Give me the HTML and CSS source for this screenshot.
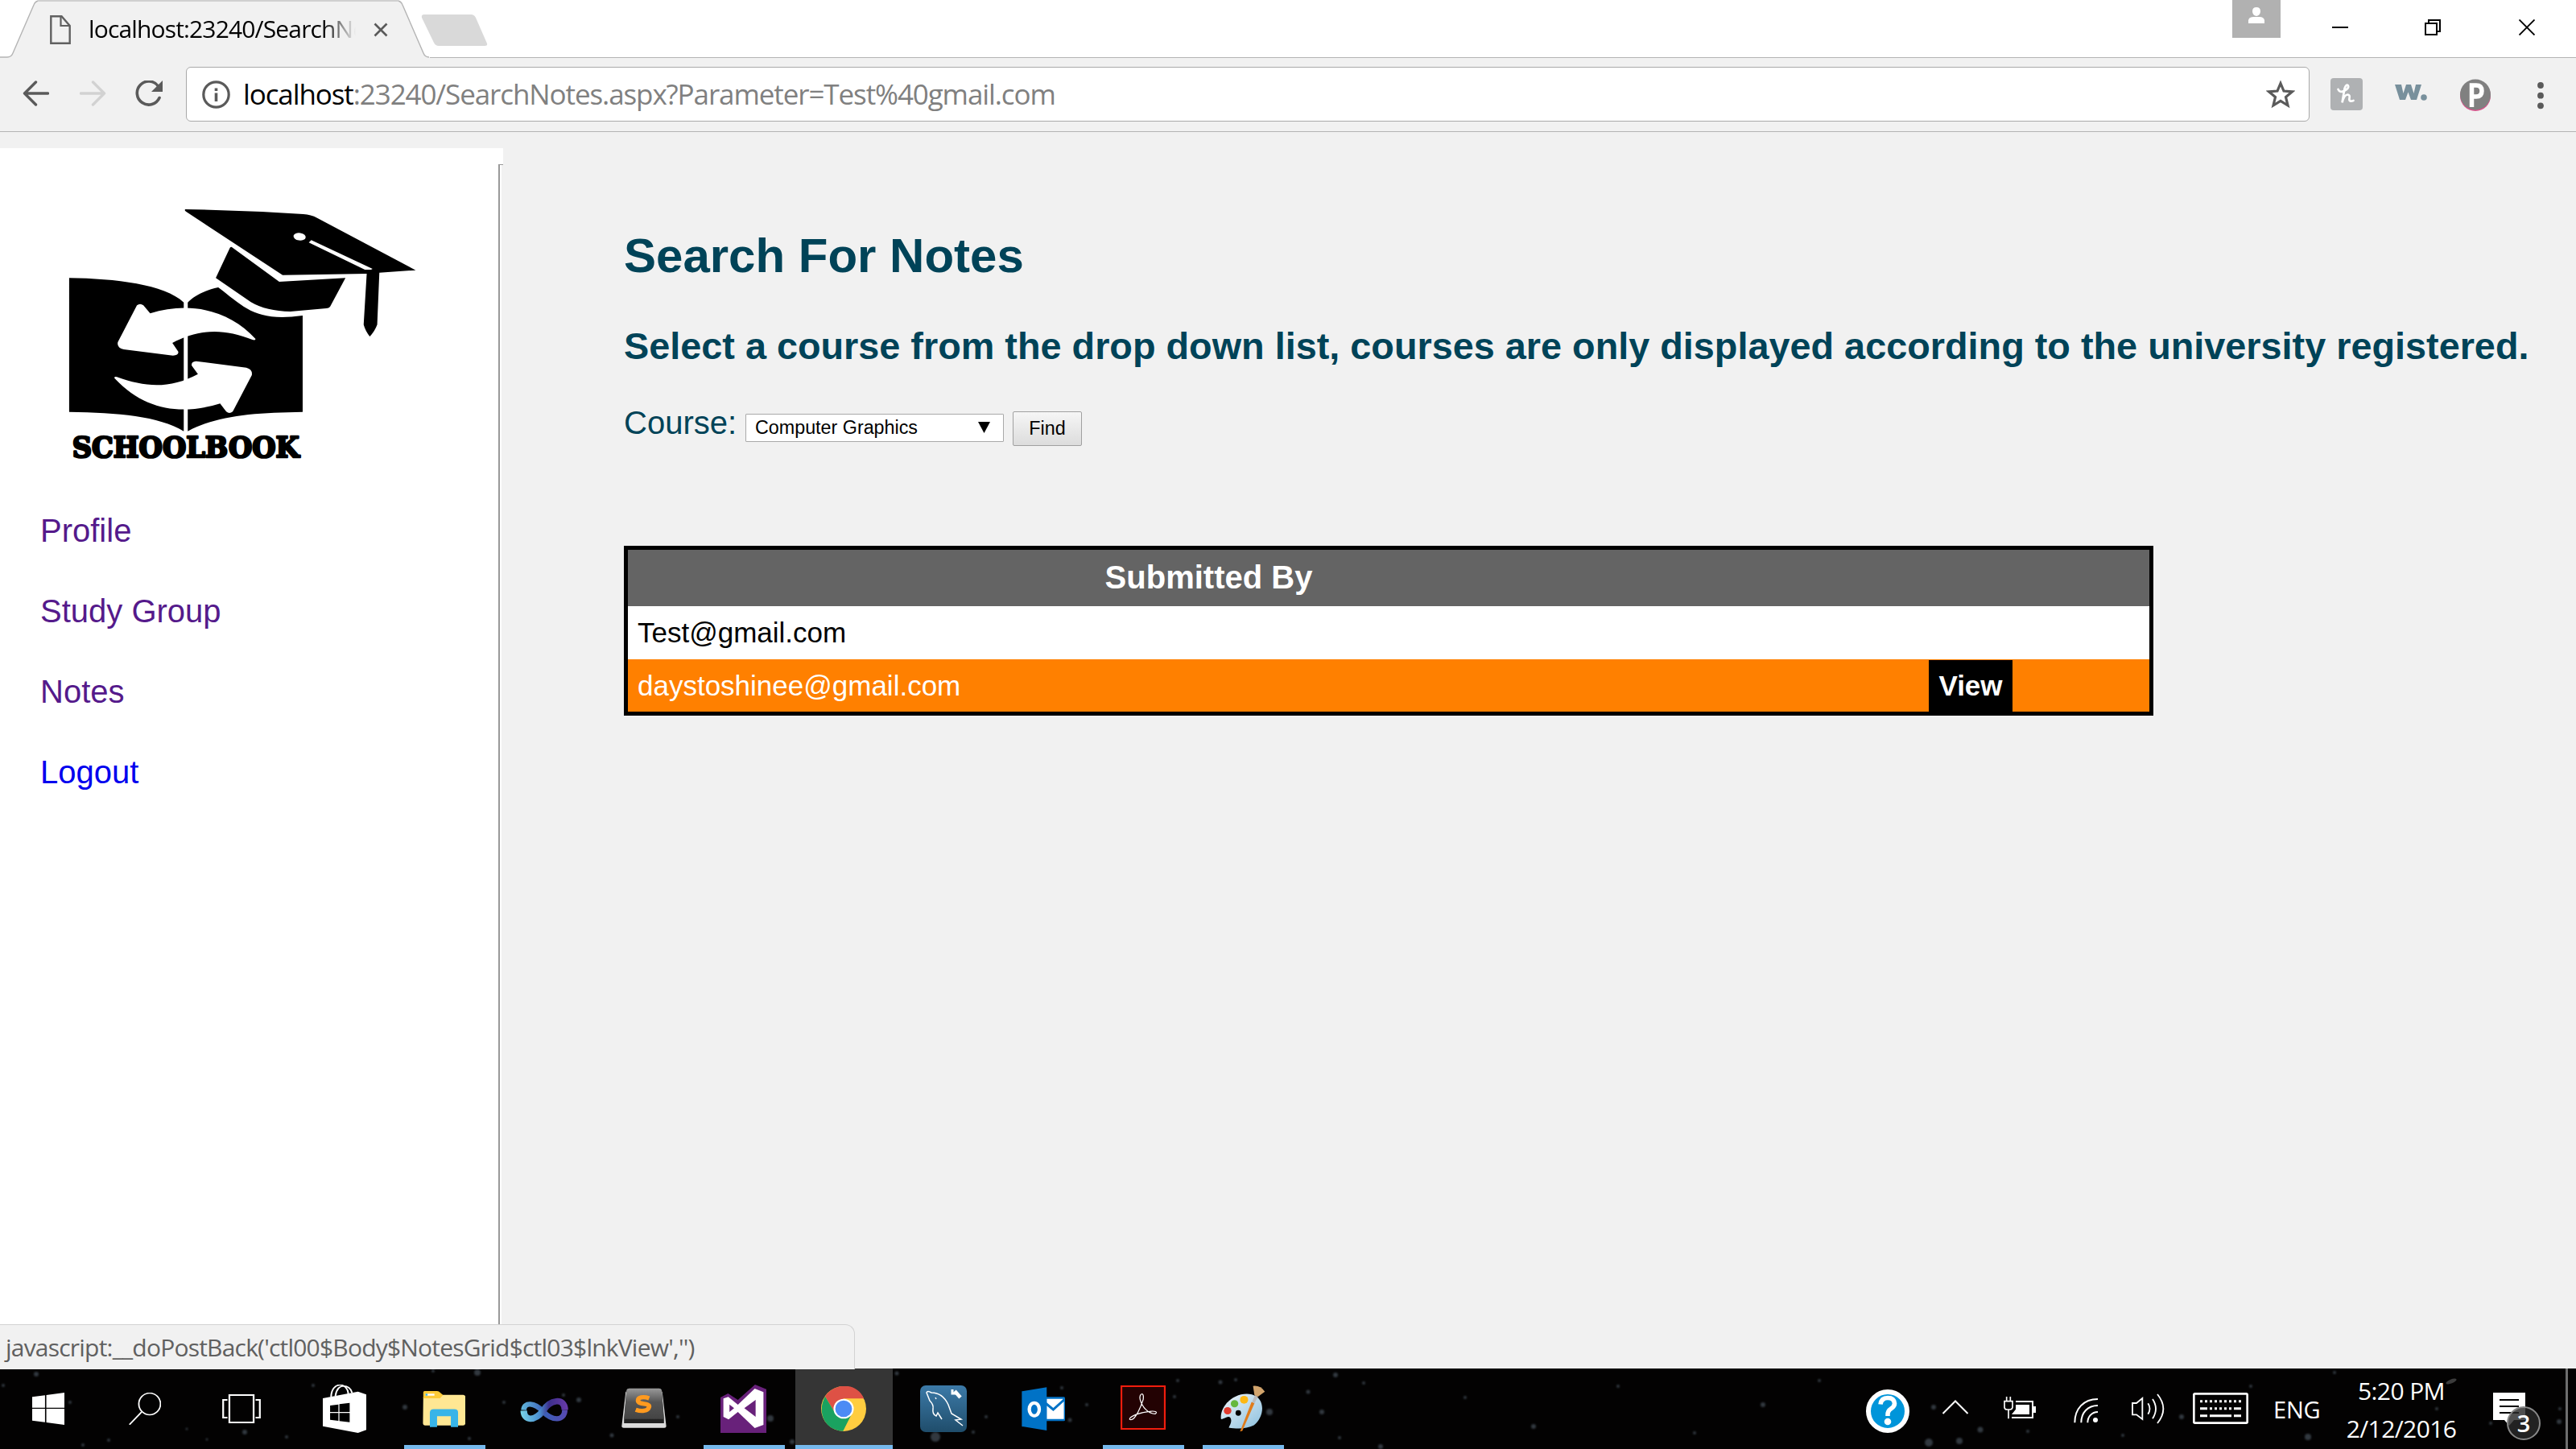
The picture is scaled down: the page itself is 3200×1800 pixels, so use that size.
FILE: index.html
```html
<!DOCTYPE html>
<html lang="en">
<head>
<meta charset="utf-8">
<title>Search For Notes</title>
<link rel="stylesheet" href="styles.css">
</head>
<body>
<div class="screen">
  <header class="tabstrip">
    <div class="tab">
      <svg class="tab-shape" viewBox="0 0 534 72"><path d="M0 71H10Q14 71 16 66L42 6Q44 1 49 1H493Q498 1 500 6L526 66Q528 71 532 71H534V72H0Z" fill="#f1f1f1"/><path d="M0 71H9Q14 71 16 66L42 6Q44 1 49 1H493Q498 1 500 6L526 66Q528 71 533 71" fill="none" stroke="#b4b4b4" stroke-width="1.4"/><path d="M47 1H495" stroke="#d0d0d0" stroke-width="2"/></svg>
      <svg class="page-icon" viewBox="0 0 26 36"><path d="M1.3 1.3H14.5L24.7 13V34.7H1.3Z" fill="none" stroke="#616161" stroke-width="2.4"/><path d="M13.5 1V13H25" fill="none" stroke="#616161" stroke-width="2.2"/></svg>
      <span class="tab-title">localhost:23240/SearchNo</span>
      <svg class="tab-close" viewBox="0 0 18 18"><path d="M1.5 1.5 16.5 16.5M16.5 1.5 1.5 16.5" stroke="#5a5a5a" stroke-width="2.6"/></svg>
    </div>
    <svg class="new-tab" viewBox="0 0 84 42"><path d="M4 1H62Q66 1 68 5L82 37Q83 40 79 40H22Q18 40 16 36L1 5Q0 1 4 1Z" fill="#d9d9d9"/></svg>
    <div class="window-controls">
      <svg class="user" viewBox="0 0 60 47"><path d="M0 0H60V47H0Z" fill="#b1b1b1"/><path d="M30 9q5 0 5 5t-5 6q-5-1-5-6t5-5zM20 29v-4q1-4 6-4h8q5 0 6 4v4z" fill="#fff"/></svg>
      <svg class="minimize" viewBox="0 0 20 20"><path d="M0 10H20" stroke="#000" stroke-width="2"/></svg>
      <svg class="restore" viewBox="0 0 20 20"><path d="M1 5H15V19H1ZM5 5V1H19V15H15" fill="none" stroke="#000" stroke-width="2"/></svg>
      <svg class="close" viewBox="0 0 20 20"><path d="M.5.5 19.5 19.5M19.5.5.5 19.5" stroke="#000" stroke-width="1.9"/></svg>
    </div>
  </header>

  <div class="toolbar">
    <svg class="back" viewBox="0 0 32 32"><path d="M31 16H2M16 2 2 16 16 30" fill="none" stroke="#5a5a5a" stroke-width="3.4" stroke-linecap="round" stroke-linejoin="round"/></svg>
    <svg class="forward" viewBox="0 0 32 32"><path d="M1 16H30M16 2 30 16 16 30" fill="none" stroke="#d2d2d2" stroke-width="3.4" stroke-linecap="round" stroke-linejoin="round"/></svg>
    <svg class="reload" viewBox="0 0 35 34"><path d="M28.5 7A14.5 14.5 0 1 0 30 21.500" fill="none" stroke="#5a5a5a" stroke-width="3.6" stroke-linecap="round"/><path d="M34 0V14H20Z" fill="#5a5a5a"/></svg>
    <div class="omnibox">
      <svg class="info" viewBox="0 0 35 35"><circle cx="17.500" cy="17.500" r="15.700" fill="none" stroke="#5a5a5a" stroke-width="3.2"/><path d="M17.500 15.500V26M17.500 9.500V13" stroke="#5a5a5a" stroke-width="3.6"/></svg>
      <span class="url"><span class="host">localhost</span>:23240/SearchNotes.aspx?Parameter=Test%40gmail.com</span>
      <svg class="star" viewBox="0 0 36 36"><path d="M18 4.500 22 14 32.500 14.800 24.500 21.500 27 32 18 26.500 9 32 11.500 21.500 3.500 14.800 14 14Z" fill="none" stroke="#5a5a5a" stroke-width="3.2"/></svg>
    </div>
    <svg class="ext-honey" viewBox="0 0 40 40"><rect width="40" height="40" rx="4" fill="#afb1b3"/><path d="M9.500 14Q11.500 18.500 17 16Q23.500 12.500 22 9.500Q19.500 7 17.500 13L14.500 30.500Q17 20.500 21.500 20.500Q24.500 21 23.500 25Q22.500 30 28.500 28" fill="none" stroke="#fff" stroke-width="2.700" stroke-linecap="round"/></svg>
    <svg class="ext-w" viewBox="0 0 40 22"><path d="M0 1H8L10.500 12 14 1H20L23.500 12 26 1H33L27 20H20L16.500 10.500 13 20H6Z" fill="#78909c"/><circle cx="36" cy="17" r="3.800" fill="#78909c"/></svg>
    <svg class="ext-p" viewBox="0 0 40 40"><circle cx="20" cy="21" r="19" fill="#d8548c"/><circle cx="20" cy="19.500" r="19" fill="#808080"/><path d="M15.500 35V8H21Q28 8 28 15T21 22H17" fill="none" stroke="#fff" stroke-width="5.500"/></svg>
    <svg class="menu" viewBox="0 0 8 34"><circle cx="4" cy="4" r="3.900" fill="#5a5a5a"/><circle cx="4" cy="16.700" r="3.900" fill="#5a5a5a"/><circle cx="4" cy="29.300" r="3.900" fill="#5a5a5a"/></svg>
  </div>

  <div class="page">
    <aside class="sidebar">
      <svg class="logo" viewBox="0 0 1568 1140" preserveAspectRatio="none">
        <path d="M120 376C270 378 430 400 492 467V947C410 890 280 878 120 875Z"/>
        <path d="M505 467C525 442 560 422 604 411C690 486 725 540 878 516V875C720 878 600 888 505 947Z"/>
        <path d="M497 120Q690 124 880 138Q905 140 925 152L1245 347 1127 356 1120 550Q1112 575 1096 594 1082 575 1076 550L1086 360 813 365 500 129Q493 124 497 120Z"/>
        <path d="M648 261 802 390 1017 376 967 483Q963 489 955 489L838 501Q760 500 710 466L596 376 642 263Q645 259 648 261Z"/>
        <ellipse cx="868" cy="222" rx="20" ry="14" fill="#fff" transform="rotate(10 868 222)"/>
        <path d="M906 235 1105 342 1100 345H1080L898 244Z" fill="#fff"/>
        <path d="M340 478Q350 468 361 478L383 508C510 462 640 495 725 603Q725 610 715 606C620 562 540 566 455 618L474 650Q477 664 457 665L297 642Q274 636 278 615Z" fill="#fff"/>
        <path d="M651 874Q640 884 630 874L610 844C490 885 370 875 267 749Q266 742 275 745C370 785 450 788 538 734L518 703Q515 688 532 686L695 710Q716 716 713 738Z" fill="#fff"/>
        <text x="130" y="1045" textLength="737" lengthAdjust="spacingAndGlyphs">SCHOOLBOOK</text>
      </svg>
      <nav class="links">
        <a class="visited">Profile</a>
        <a class="visited">Study Group</a>
        <a class="visited">Notes</a>
        <a>Logout</a>
      </nav>
    </aside>
    <main class="content">
      <h1>Search For Notes</h1>
      <h2>Select a course from the drop down list, courses are only displayed according to the university registered.</h2>
      <div class="search-row">
        <span class="label">Course:</span>
        <div class="select"><span>Computer Graphics</span><svg class="caret" viewBox="0 0 15 14"><path d="M0 0H15L7.500 14Z"/></svg></div>
        <div class="button">Find</div>
      </div>
      <table class="grid">
        <tr class="head"><th class="who">Submitted By</th><th></th></tr>
        <tr class="row"><td>Test@gmail.com</td><td></td></tr>
        <tr class="row active"><td>daystoshinee@gmail.com</td><td class="action"><a class="view">View</a></td></tr>
      </table>
    </main>
    <div class="status">javascript:__doPostBack('ctl00$Body$NotesGrid$ctl03$lnkView','')</div>
  </div>

  <footer class="taskbar">
    <svg class="stars" viewBox="0 0 3200 100"><g fill="#46505a"><circle cx="45" cy="7" r="3"/><circle cx="4" cy="21" r="2"/><circle cx="87" cy="42" r="2"/><circle cx="103" cy="95" r="2"/><circle cx="135" cy="89" r="2"/><circle cx="232" cy="75" r="1.500"/><circle cx="257" cy="88" r="1.500"/><circle cx="304" cy="79" r="3"/><circle cx="356" cy="85" r="2"/><circle cx="389" cy="21" r="2"/><circle cx="503" cy="48" r="3"/><circle cx="538" cy="3" r="2"/><circle cx="593" cy="5" r="4"/><circle cx="583" cy="87" r="2"/><circle cx="626" cy="42" r="2"/><circle cx="700" cy="33" r="2"/><circle cx="719" cy="39" r="3"/><circle cx="760" cy="83" r="2.500"/><circle cx="842" cy="60" r="2"/><circle cx="957" cy="62" r="4"/><circle cx="984" cy="91" r="3"/><circle cx="1114" cy="6" r="2.500"/><circle cx="1162" cy="85" r="6"/><circle cx="1209" cy="79" r="2"/><circle cx="1225" cy="60" r="2"/><circle cx="1319" cy="24" r="2"/><circle cx="1329" cy="64" r="2.500"/><circle cx="1350" cy="45" r="2"/><circle cx="1459" cy="35" r="2"/><circle cx="1463" cy="15" r="2"/><circle cx="1516" cy="17" r="2.500"/><circle cx="1535" cy="14" r="2"/><circle cx="1577" cy="54" r="4"/><circle cx="1625" cy="29" r="2.500"/><circle cx="1642" cy="54" r="3"/><circle cx="1659" cy="8" r="3"/><circle cx="1664" cy="86" r="2"/><circle cx="1694" cy="18" r="2"/><circle cx="1715" cy="97" r="3"/><circle cx="1820" cy="36" r="2"/><circle cx="1905" cy="72" r="3"/><circle cx="2010" cy="22" r="2"/><circle cx="2105" cy="80" r="2"/><circle cx="2190" cy="45" r="3"/><circle cx="2260" cy="15" r="2"/><circle cx="2396" cy="92" r="5"/><circle cx="2402" cy="48" r="3"/><circle cx="2434" cy="90" r="4"/><circle cx="2460" cy="76" r="3.500"/><circle cx="2519" cy="78" r="2"/><circle cx="2637" cy="83" r="2"/><circle cx="2710" cy="60" r="3"/><circle cx="2796" cy="22" r="2"/><circle cx="2867" cy="85" r="4"/><circle cx="2900" cy="5" r="2"/><circle cx="3027" cy="50" r="2"/><circle cx="3094" cy="68" r="2"/><circle cx="3179" cy="66" r="3"/><circle cx="3180" cy="50" r="2"/></g><ellipse cx="3045" cy="16" rx="7" ry="2.500" fill="#555" transform="rotate(-22 3045 16)"/></svg>
    <div class="system">
      <div class="slot"><svg width="40" height="40" viewBox="98 330 98 120" preserveAspectRatio="none"><path d="M98 346 137 340V386H98ZM141 339 196 330V386H141ZM98 390H137V440L98 434ZM141 390H196V450L141 441Z" fill="#fff"/></svg></div>
      <div class="slot"><svg width="40" height="40" viewBox="392 330 98 120" preserveAspectRatio="none"><ellipse cx="455.500" cy="372" rx="33" ry="40.500" fill="none" stroke="#fff" stroke-width="4.500"/><path d="M431 402 394 449" stroke="#fff" stroke-width="5"/></svg></div>
      <div class="slot"><svg width="48" height="36" viewBox="676 336 118 108" preserveAspectRatio="none"><path d="M698 339H772V441H698ZM692 357H679V423H692M778 357H791V423H778" fill="none" stroke="#fff" stroke-width="5.500"/></svg></div>
    </div>
    <div class="apps">
      <div class="slot"><svg width="54" height="60" viewBox="982 300 131 180" preserveAspectRatio="none"><path d="M1007 346C1008 288 1056 288 1059 336M1020 342C1026 290 1064 300 1070 330" fill="none" stroke="#fff" stroke-width="5"/><path d="M982 351 1088 326 1113 337V469L1088 480 982 455Z" fill="#fff"/><path d="M1004 378 1029 374V402H1004ZM1032 373 1063 368V402H1032ZM1004 406H1029V435L1004 431ZM1032 406H1063V440L1032 436Z" fill="#000"/></svg></div>
      <div class="slot open"><svg class="folder" width="53" height="45" viewBox="1287 323 130 134" preserveAspectRatio="none"><path d="M1289 345H1410Q1417 337 1417 345V444Q1416 450 1410 450H1294Q1288 450 1288 443Z" fill="#ffe793"/><path d="M1340 337H1411Q1417 338 1417 345V360H1340Z" fill="#ffe793"/><path d="M1293 323H1331Q1337 323 1340 328L1349 338 1340 350H1289V328Q1289 324 1293 323Z" fill="#fecb38"/><path d="M1296 333H1323V340H1296Z" fill="#fff"/><path d="M1296 333H1302V340H1296Z" fill="#38b4e8"/><path d="M1309 456V402Q1310 390 1320 390H1384Q1395 390 1395 402V456H1373V416H1331V456Z" fill="#38b4e8"/></svg></div>
      <div class="slot"><svg class="blend" width="60" height="32" viewBox="72 348 168 96" preserveAspectRatio="none"><defs><linearGradient id="b1" gradientUnits="userSpaceOnUse" x1="75" x2="238"><stop offset="0" stop-color="#78d3e6"/><stop offset=".4" stop-color="#4a8ed0"/><stop offset=".6" stop-color="#3c2f8c"/><stop offset="1" stop-color="#6a3aa8"/></linearGradient><linearGradient id="b2" gradientUnits="userSpaceOnUse" x1="75" x2="238"><stop offset="0" stop-color="#62b8dc"/><stop offset=".5" stop-color="#3a5fb8"/><stop offset="1" stop-color="#5848b0"/></linearGradient></defs><path d="M85 395C86 364 122 366 152 400S226 440 228 394" fill="none" stroke="url(#b2)" stroke-width="19"/><path d="M85 397C86 436 122 438 152 398C176 356 226 346 228 394" fill="none" stroke="url(#b1)" stroke-width="23"/></svg></div>
      <div class="slot"><svg class="sublime" width="56" height="50" viewBox="425 311 158 151" preserveAspectRatio="none"><defs><linearGradient id="s1" x2="0" y2="1"><stop offset="0" stop-color="#999"/><stop offset=".45" stop-color="#555"/><stop offset="1" stop-color="#444"/></linearGradient></defs><path d="M440 325H568L582 455Q582 461 575 461H433Q425 461 426 454Z" fill="#dcdcdc"/><path d="M443 319Q445 313 452 313H557Q564 313 566 319L574 432V444H434V432Z" fill="#222"/><path d="M443 319Q445 313 452 313H557Q564 313 566 319L574 428H434Z" fill="url(#s1)"/><path d="M522 350C500 342 483 347 483 359C485 377 523 365 522 382C518 400 494 400 475 393" fill="none" stroke="#ff9a1f" stroke-width="16"/></svg></div>
      <div class="slot open"><svg class="vs" width="57" height="60" viewBox="772 300 158 180" preserveAspectRatio="none"><path d="M772 348 798 333 832 357 891 300 930 317V480H772Z" fill="#68217a"/><path d="M782 352 799 346 832 375 890 315 920 328V450L890 462 832 402 800 430 782 420ZM803 374V402L819 388ZM854 388 893 420V357Z" fill="#fff" fill-rule="evenodd"/></svg></div>
      <div class="slot open focused"><svg width="56" height="56" viewBox="1120 306 156 168" preserveAspectRatio="none"><ellipse cx="1198" cy="390" rx="78" ry="84" fill="#ffcd40"/><path d="M1134 344C1165 292 1245 290 1268 352H1198L1165 400Z" fill="#de5145"/><path d="M1134 344C1105 400 1130 470 1196 473L1228 405 1198 426 1165 400Z" fill="#1aa260"/><ellipse cx="1198" cy="390" rx="35" ry="37" fill="#fff"/><ellipse cx="1198" cy="390" rx="29" ry="31" fill="#4c8bf5"/></svg></div>
      <div class="slot"><svg width="58" height="58" viewBox="0 0 58 58"><defs><linearGradient id="m1" x2="0" y2="1"><stop offset="0" stop-color="#3c7aa8"/><stop offset="1" stop-color="#1f4d6b"/></linearGradient></defs><rect width="58" height="58" rx="7" fill="url(#m1)"/><path d="M27 42 22 34 20 38Q15 36 16 29 17 24 12 19L8 9Q9 6 14 9 28 9 35 24L39 35 51 42 44 43 53 50M19 15 20 17" fill="none" stroke="#fff" stroke-width="1.500"/><path d="M43 7 50 15" stroke="#fff" stroke-width="4.500"/><path d="M40 5V10H46" fill="none" stroke="#fff" stroke-width="3"/></svg></div>
      <div class="slot"><svg width="54" height="54" viewBox="304 308 152 162" preserveAspectRatio="none"><path d="M385 345H452Q456 345 456 350V430Q456 435 452 435H385Z" fill="#0072c6"/><path d="M392 352H450L415 386 392 366ZM392 378 415 398 452 362V427H392Z" fill="#fff"/><path d="M305 324 392 309V470L305 455Z" fill="#0072c6"/><ellipse cx="348.500" cy="391" rx="17.500" ry="24" fill="none" stroke="#fff" stroke-width="12"/></svg></div>
      <div class="slot open"><svg class="acrobat" width="56" height="55" viewBox="649 303 157 165" preserveAspectRatio="none"><path d="M652 306H803V465H652Z" fill="#230203" stroke="#f21d0d" stroke-width="6"/><path d="M681 430C700 440 722 375 728 355 733 325 712 332 717 355 724 384 745 408 770 409 780 402 768 397 750 400 720 404 690 414 681 426Z" fill="none" stroke="#fff" stroke-width="3.500"/></svg></div>
      <div class="slot open"><svg class="paint" width="56" height="58" viewBox="996 306 156 166" preserveAspectRatio="none"><defs><linearGradient id="p1" x1="0" x2="1" y2="1"><stop offset="0" stop-color="#f0f6fa"/><stop offset="1" stop-color="#8cc0de"/></linearGradient></defs><path d="M998 425C994 375 1050 325 1105 338 1155 352 1148 420 1112 448 1085 462 1050 460 1025 456 1030 445 1038 432 1030 420 1020 412 1005 430 998 425Z" fill="url(#p1)"/><ellipse cx="1058" cy="404" rx="9.500" ry="10" fill="#000"/><circle cx="1021" cy="396" r="13" fill="#e23b2e"/><circle cx="1045" cy="371" r="13" fill="#66b83f"/><circle cx="1078" cy="357" r="14" fill="#fdb813"/><path d="M1104 365 1114 370 1072 468 1064 470Z" fill="#e07c1c"/><path d="M1106 364 1116 340 1126 346 1114 370Z" fill="#bbb"/><path d="M1114 340 1109 308Q1135 305 1150 328L1126 346Z" fill="#d2a46c"/></svg></div>
    </div>
    <div class="tray">
      <svg class="help" width="56" height="56" viewBox="0 0 56 56"><circle cx="28" cy="28" r="24" fill="#0095da" stroke="#fff" stroke-width="6"/><path d="M19 19.500Q20 11.500 28 11.500T36.500 18.500Q36.500 22 32 25T28 33V34" fill="none" stroke="#fff" stroke-width="5.600"/><circle cx="28" cy="41" r="4.300" fill="#fff"/></svg>
      <svg class="chevron" width="34" height="20" viewBox="0 0 34 20"><path d="M1.500 18 17 2.500 32.500 18" fill="none" stroke="#fff" stroke-width="2"/></svg>
      <svg class="battery" width="40" height="28" viewBox="627 165 120 84"><path d="M672 183H735V243H657" fill="none" stroke="#fff" stroke-width="6"/><path d="M738 201H747V225H738ZM672 195H723V231H657L672 212Z" fill="#fff"/><path d="M630 182H660V205Q658 213 650 213H640Q631 213 630 205ZM638 165V181M652 165V181M645 213V247" fill="none" stroke="#fff" stroke-width="5"/></svg>
      <svg class="wifi" width="30" height="32" viewBox="888 168 90 96"><path d="M892 262C892 210 925 174 978 174M916 262C916 225 940 198 978 198M940 262C940 240 955 222 978 222" fill="none" stroke="#fff" stroke-width="6"/><circle cx="969" cy="252" r="9" fill="#fff"/></svg>
      <svg class="volume" width="42" height="38" viewBox="1106 153 126 114"><path d="M1109 189H1124L1146 171V249L1124 232H1109ZM1167 190Q1180 210 1167 230M1184 174Q1208 210 1184 247M1202 156Q1246 210 1202 264" fill="none" stroke="#fff" stroke-width="5.500"/></svg>
      <svg class="keyboard" width="69" height="39" viewBox="72 150 207 117"><rect x="76" y="154" width="199" height="109" rx="4" fill="none" stroke="#fff" stroke-width="8"/><path d="M99 182H252" stroke="#fff" stroke-width="9" stroke-dasharray="9 9"/><path d="M135 209H216" stroke="#fff" stroke-width="9" stroke-dasharray="9 9"/><path d="M99 209H126M225 209H252M99 236H126M135 236H216M225 236H252" stroke="#fff" stroke-width="9"/></svg>
      <span class="lang">ENG</span>
      <div class="clock"><span class="time">5:20 PM</span><span class="date">2/12/2016</span></div>
      <div class="notify"><svg width="40" height="42" viewBox="0 0 40 42"><path d="M0 0H40V34H26L20 41 14 34H0Z" fill="#fff"/><path d="M8 9H32M8 17H32M8 25H32" stroke="#000" stroke-width="2"/></svg><span class="badge">3</span></div>
      <div class="show-desktop"></div>
    </div>
  </footer>
</div>
</body>
</html>
```
FILE: styles.css
```css
* { box-sizing: border-box; }
body { margin: 0; background: #f1f1f1; font-family: "Liberation Sans", Arial, sans-serif; }
svg { display: block; flex: none; }
.screen { width: 3200px; height: 1800px; display: flex; flex-direction: column; overflow: hidden; }

/* Tab strip */
.tabstrip { height: 72px; flex: none; display: flex; align-items: flex-start; background: #fff linear-gradient(#b4b4b4, #b4b4b4) 0 71px / 100% 1px no-repeat; }
.tab { position: relative; width: 534px; height: 72px; display: flex; align-items: flex-start; }
.tab-shape { position: absolute; left: 0; top: 0; width: 534px; height: 72px; }
.page-icon { position: relative; width: 26px; height: 36px; margin: 19px 0 0 62px; }
.tab-title { position: relative; width: 354px; margin-left: 22px; white-space: nowrap; font: 30px/42px "Open Sans", sans-serif; letter-spacing: -0.85px; padding-top: 15px; color: #000; -webkit-mask-image: linear-gradient(90deg, #000 290px, transparent 332px); mask-image: linear-gradient(90deg, #000 290px, transparent 332px); }
.tab-close { position: relative; width: 18px; height: 18px; margin: 28px 0 0 0; }
.new-tab { width: 84px; height: 42px; margin: 17px 0 0 -11px; }
.window-controls { margin-left: auto; display: flex; }
.user { width: 60px; height: 47px; }
.minimize, .restore, .close { width: 20px; height: 20px; margin-top: 24px; }
.minimize { margin-left: 64px; }
.restore { margin-left: 95px; }
.close { margin: 24px 51px 0 97px; }

/* Toolbar */
.toolbar { height: 92px; flex: none; display: flex; align-items: flex-start; background: #f1f1f1; border-bottom: 1px solid #b4b4b4; }
.back { width: 33px; height: 32px; margin: 28px 0 0 28px; }
.forward { width: 33px; height: 32px; margin: 28px 0 0 38px; }
.reload { width: 35px; height: 34px; margin: 28px 0 0 36px; }
.omnibox { width: 2638px; height: 68px; margin: 11px 0 0 28px; border: 1px solid #a9a9a9; border-radius: 6px; background: #fff; display: flex; align-items: flex-start; }
.info { width: 35px; height: 35px; margin: 16px 0 0 19px; }
.url { margin: 9px 0 0 16px; font: 35px/48px "Open Sans", sans-serif; letter-spacing: -1.1px; color: #808080; white-space: nowrap; }
.host { color: #000; }
.star { width: 36px; height: 36px; margin: 15px 17px 0 auto; }
.ext-honey { width: 40px; height: 40px; margin: 25px 0 0 26px; }
.ext-w { width: 40px; height: 22px; margin: 32px 0 0 40px; }
.ext-p { width: 40px; height: 40px; margin: 26px 0 0 40px; }
.menu { width: 8px; height: 34px; margin: 30px 0 0 57px; }

/* Page */
.page { position: relative; flex: 1; display: flex; align-items: stretch; padding-top: 20px; background: #f1f1f1; }
.sidebar { width: 625px; padding-top: 36px; background:
  linear-gradient(#999, #999) 619px 20px / 6px 1px no-repeat,
  linear-gradient(#999, #999) 619px 20px / 2px 100% no-repeat,
  linear-gradient(#f1f1f1, #f1f1f1) 623px 21px / 2px 100% no-repeat,
  #fff; }
.logo { width: 600px; height: 380px; margin-left: 40px; }
.logo text { font: bold 108px "DejaVu Serif", serif; stroke: #000; stroke-width: 8px; stroke-linejoin: round; }
.links { display: flex; flex-direction: column; gap: 54px; padding: 36px 0 0 50px; margin: 0; font-size: 40px; line-height: 46px; color: #0000ee; }
.visited { color: #551a8b; }
.content { padding: 100px 0 0 150px; color: #004358; }
h1 { margin: 0; font-size: 60px; line-height: 68px; }
h2 { margin: 51px 0 0; font-size: 46.8px; line-height: 54px; white-space: nowrap; }
.search-row { display: flex; align-items: flex-start; margin-top: 44px; height: 177px; }
.label { width: 151px; font-size: 40px; line-height: 48px; }
.select { width: 321px; height: 35px; margin-top: 13px; border: 1px solid #a9a9a9; border-radius: 1px; background: #fff; color: #000; font-size: 23.3px; line-height: 33px; padding: 0 16px 0 11px; display: flex; justify-content: space-between; }
.caret { width: 15px; height: 14px; margin-top: 9px; }
.button { width: 86px; height: 43px; margin: 10px 0 0 11px; border: 1px solid #a0a0a0; border-radius: 2px; background: linear-gradient(#f6f6f6, #dcdcdc); color: #000; font-size: 23.3px; line-height: 40px; text-align: center; }
.grid { width: 1900px; table-layout: fixed; border: 5px solid #000; border-spacing: 0; font-size: 35px; color: #000; background: #fff; }
.grid td, .grid th { padding: 0; vertical-align: top; }
.head { height: 70px; background: #646464; color: #fff; font-size: 40px; line-height: 69px; }
.who { width: 1443px; }
.row { height: 66px; line-height: 65px; }
.row td:first-child { padding-left: 12px; }
.active { height: 65px; background: #ff8000; color: #fff; line-height: 65px; }
.action { text-align: center; }
.view { display: block; width: 104px; height: 64px; margin: 1px 0 0 173px; background: #000; font-weight: bold; line-height: 63px; }
.status { position: absolute; left: 0; bottom: -1px; width: 1062px; height: 56px; background: #f1f1f1; border: solid #d2d2d2; border-width: 1px 1px 0 0; border-radius: 0 12px 0 0; padding: 7px 0 0 7px; font: 30px/42px "Open Sans", sans-serif; letter-spacing: -0.79px; color: #606060; z-index: 1; }

/* Taskbar */
.taskbar { position: relative; height: 100px; flex: none; display: flex; background: #030202; color: #fff; font-family: "Open Sans", sans-serif; }
.stars { position: absolute; left: 0; top: 0; width: 3200px; height: 100px; opacity: .7; }
.stars g { filter: blur(1px); }
.system, .apps, .tray { position: relative; display: flex; }
.slot { display: flex; align-items: center; justify-content: center; height: 100px; }
.system .slot { width: 120px; }
.apps { margin-left: 8px; gap: 3px; }
.apps .slot { width: 121px; padding-right: 2px; }
.slot.open { background: linear-gradient(#76b9ed, #76b9ed) center bottom / 101px 5px no-repeat; }
.slot.focused { background: linear-gradient(#76b9ed, #76b9ed) center bottom / 121px 5px no-repeat #353535; }
.blend { margin-top: 4px; }
.sublime { margin-bottom: 2px; }
.acrobat { margin-bottom: 3px; }
.tray { margin-left: auto; align-items: flex-start; }
.help { margin-top: 25px; }
.chevron { margin: 38px 0 0 39px; }
.battery { margin: 35px 0 0 43px; }
.wifi { margin: 36px 0 0 47px; }
.volume { margin: 31px 0 0 42px; }
.keyboard { margin: 30px 0 0 34px; }
.lang { width: 60px; margin: 30px 0 0 31px; font-size: 29px; line-height: 42px; letter-spacing: -0.2px; }
.clock { width: 160px; margin-left: 19px; text-align: center; display: flex; flex-direction: column; gap: 5px; padding-top: 7px; font-size: 30px; line-height: 42px; letter-spacing: -0.6px; }
.notify { position: relative; width: 59px; margin: 30px 0 0 34px; }
.badge { position: absolute; left: 17px; top: 17px; width: 42px; height: 42px; border: 2px solid #888; border-radius: 50%; background: rgba(42, 42, 42, .82); text-align: center; font-size: 29px; font-weight: 600; line-height: 37px; }
.show-desktop { width: 3px; height: 100px; margin: 0 10px 0 31px; background: #6e6e6e; }
```
